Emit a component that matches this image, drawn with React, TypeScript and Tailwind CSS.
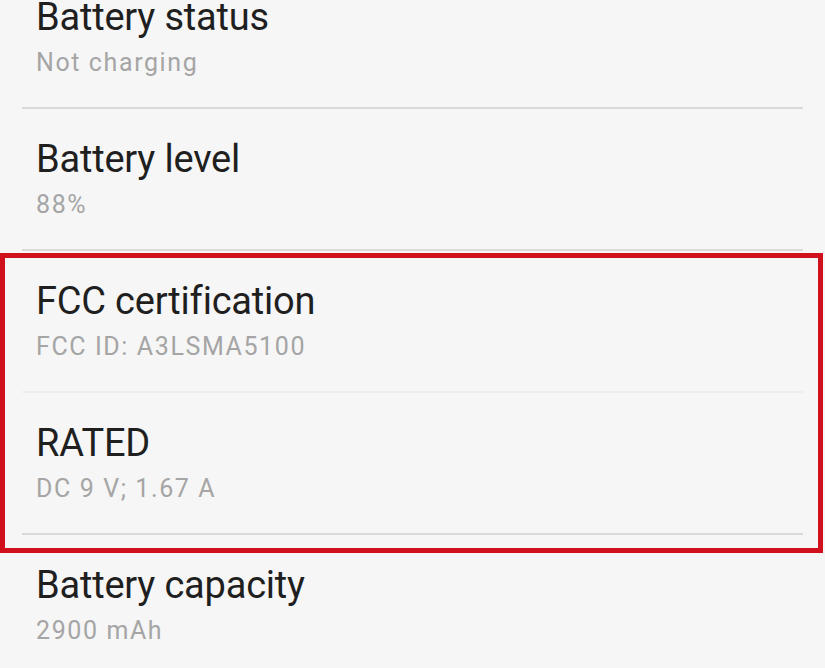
const rows = [
  { title: "Battery status", value: "Not charging", line: "strong" },
  { title: "Battery level", value: "88%", line: "strong" },
  { title: "FCC certification", value: "FCC ID: A3LSMA5100", line: "faint" },
  { title: "RATED", value: "DC 9 V; 1.67 A", line: "strong" },
  { title: "Battery capacity", value: "2900 mAh", line: "none" },
];

const App = () => {
  return (
    <div className="relative h-[668px] w-[825px] overflow-hidden bg-[#f6f6f6] font-['Roboto',sans-serif]">
      <div className="-mt-[33px]">
        {rows.map((row) => (
          <div key={row.title} className="flex h-[142px] flex-col">
            <div className="flex-1 px-[36px] pt-[28px]">
              <div className="text-[38px] leading-[44px] tracking-[-0.2px] text-[#1f1f1f]">{row.title}</div>
              <div className="mt-[9px] text-[25px] leading-[30px] tracking-[1.6px] text-[#a5a5a5]">
                {row.value}
              </div>
            </div>
            {row.line === "strong" && <div className="mx-[22px] h-[2px] bg-[#d9d9d9]" />}
            {row.line === "faint" && <div className="mx-[22px] h-[2px] bg-[#eeeeee]" />}
          </div>
        ))}
      </div>
      <div className="pointer-events-none absolute left-0 top-[253px] h-[300px] w-[823px] border-[5px] border-[#d0101c]" />
    </div>
  );
};

export default App;
